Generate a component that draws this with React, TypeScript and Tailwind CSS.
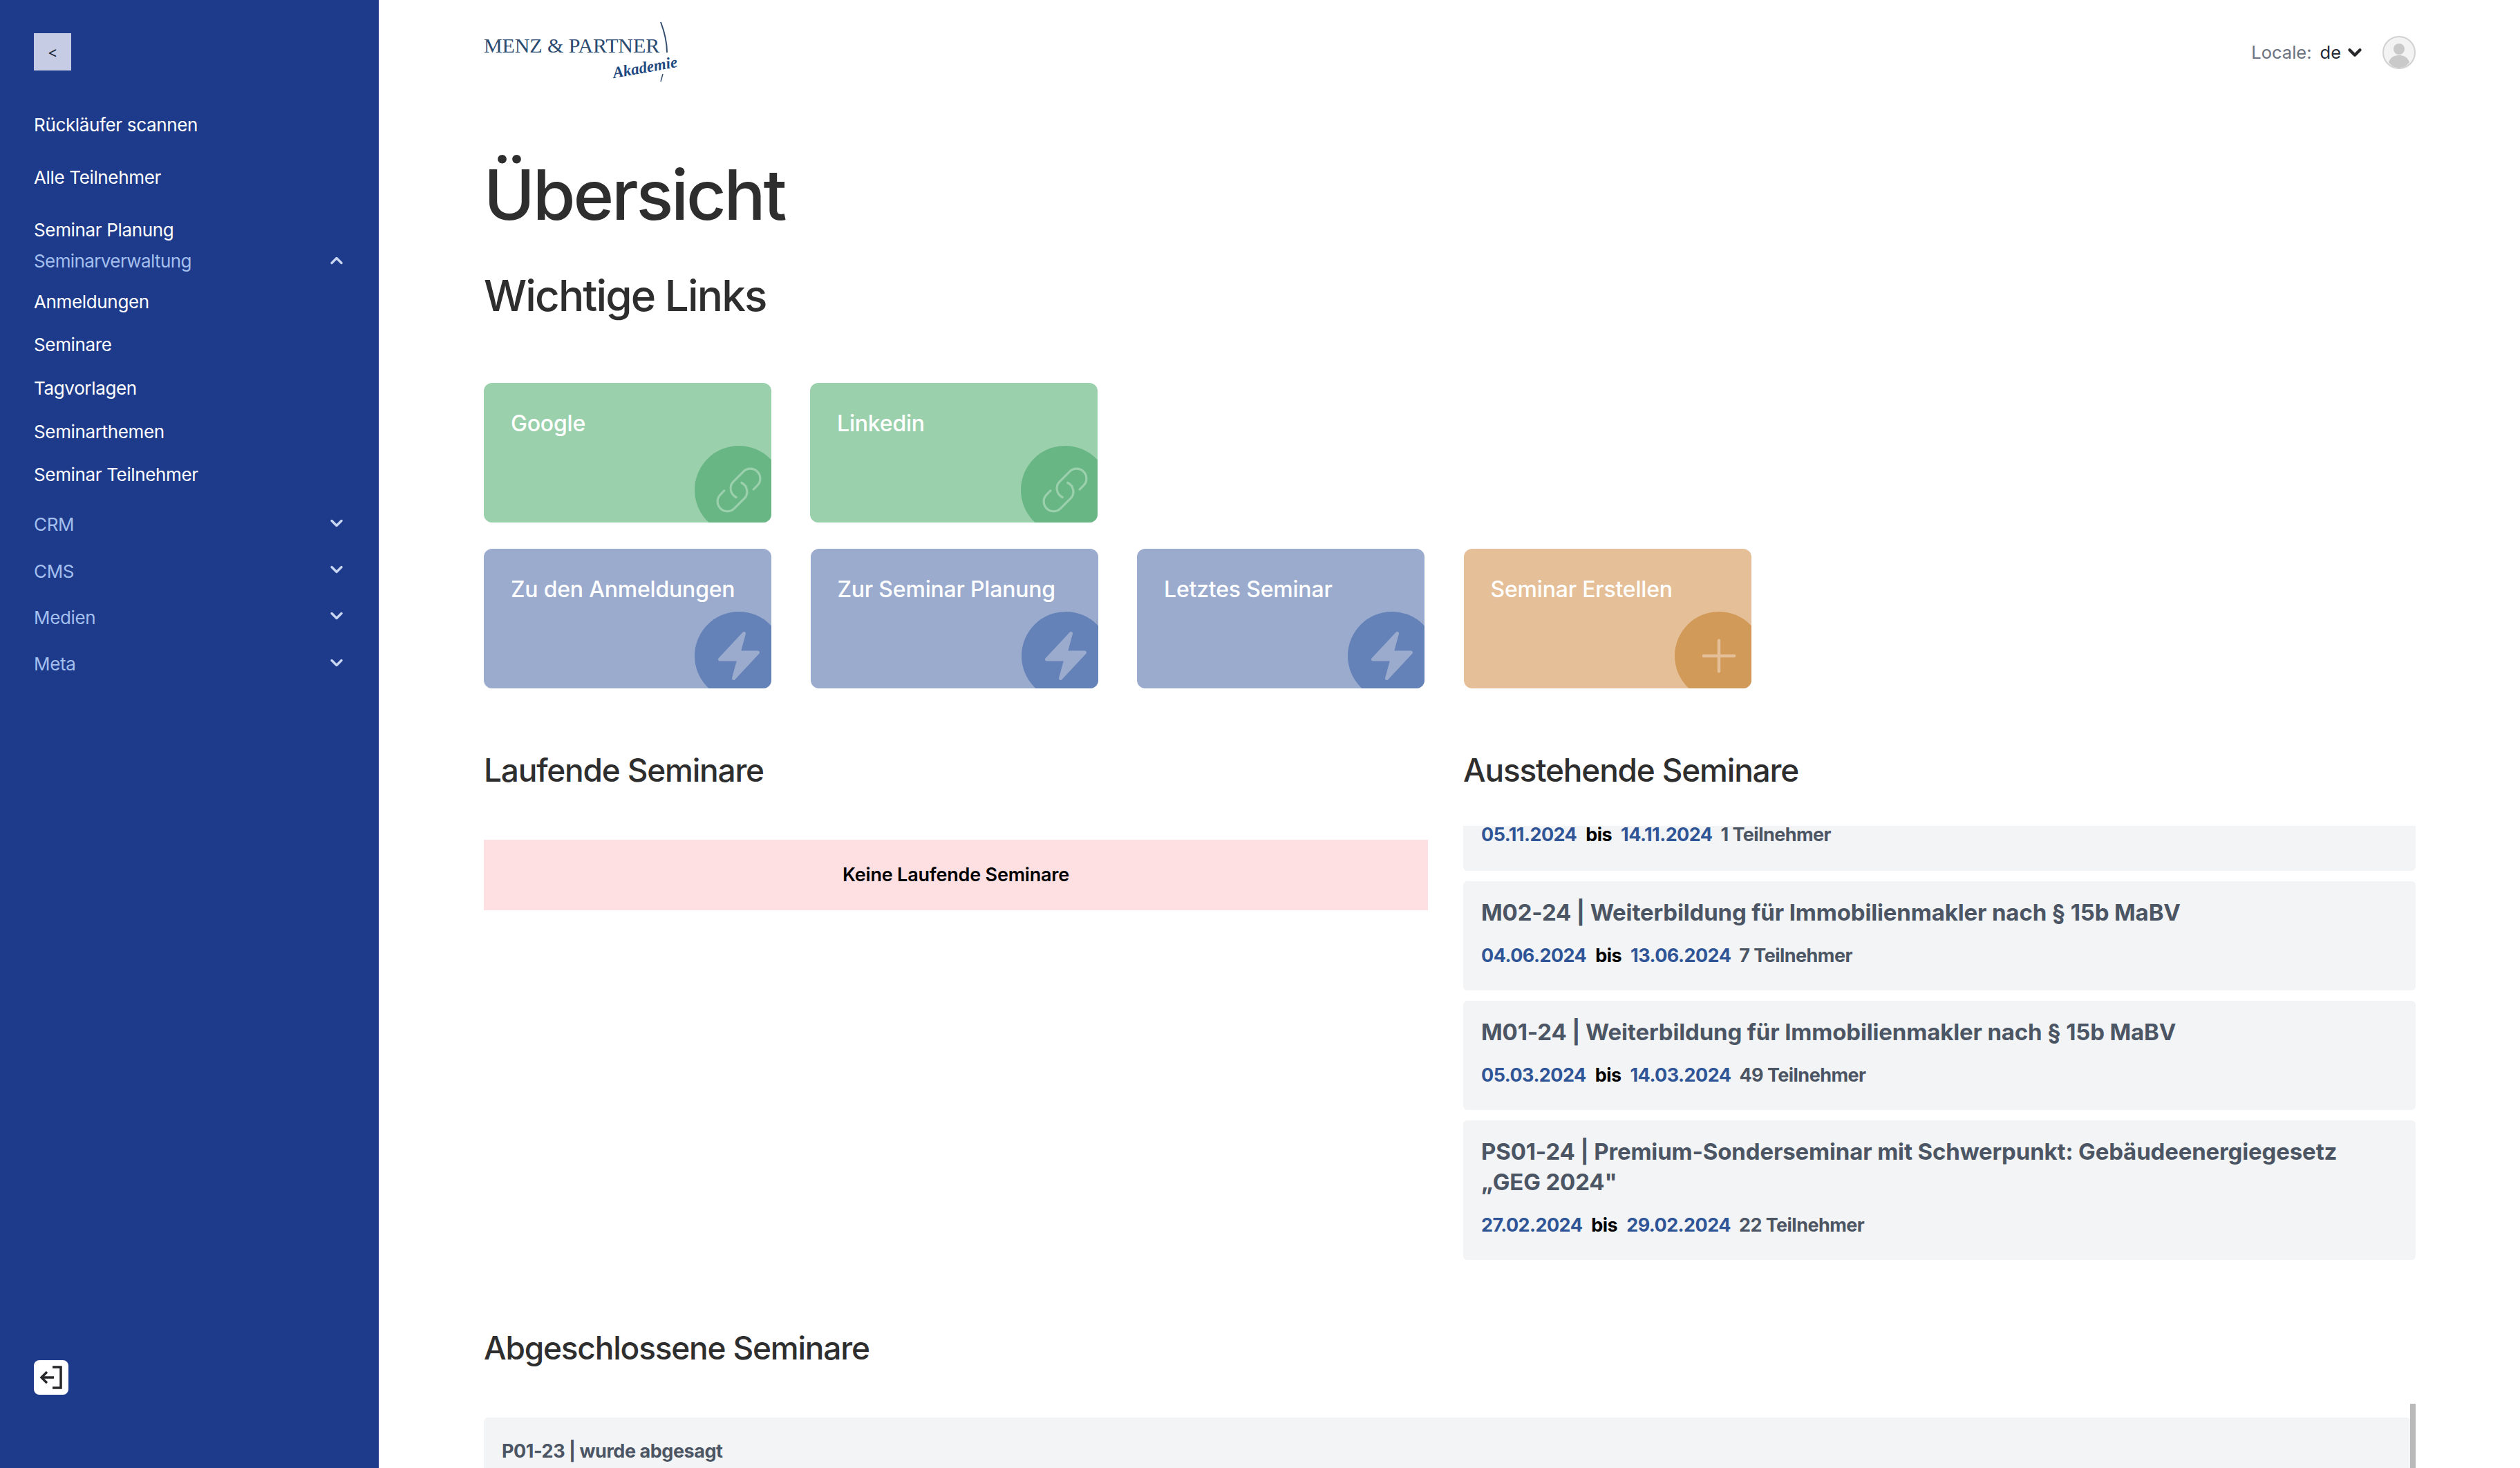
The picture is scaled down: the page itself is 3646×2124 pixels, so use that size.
import { ChevronDown, ChevronUp, Plus } from "lucide-react";
import { HiBolt, HiOutlineLink } from "react-icons/hi2";

const subLinks = ["Anmeldungen", "Seminare", "Tagvorlagen", "Seminarthemen", "Seminar Teilnehmer"];
const groups = ["CRM", "CMS", "Medien", "Meta"];

const upcoming = [
  {
    title: "M02-24 | Weiterbildung für Immobilienmakler nach § 15b MaBV",
    from: "04.06.2024",
    to: "13.06.2024",
    people: "7 Teilnehmer",
  },
  {
    title: "M01-24 | Weiterbildung für Immobilienmakler nach § 15b MaBV",
    from: "05.03.2024",
    to: "14.03.2024",
    people: "49 Teilnehmer",
  },
  {
    title: "PS01-24 | Premium-Sonderseminar mit Schwerpunkt: Gebäudeenergiegesetz „GEG\u00a02024\"",
    from: "27.02.2024",
    to: "29.02.2024",
    people: "22 Teilnehmer",
  },
];

function Sidebar() {
  return (
    <aside className="w-[548px] shrink-0 h-full bg-[#1e3a8a] flex flex-col pl-[49px] pr-[50px] text-[26px] tracking-[-0.35px]">
      <button className="mt-[48px] w-[54px] h-[54px] shrink-0 bg-[#c7cce5] flex items-center justify-center text-[#1f2937] text-[22px]">
        &lt;
      </button>

      <div className="mt-[58px] flex flex-col gap-[36px] text-white">
        <a className="h-[40px] flex items-center">Rückläufer scannen</a>
        <a className="h-[40px] flex items-center">Alle Teilnehmer</a>
        <a className="h-[40px] flex items-center">Seminar Planung</a>
      </div>

      <div className="mt-[10px] h-[30px] flex items-center justify-between text-[#a3bfee] tracking-[-0.6px]">
        <span>Seminarverwaltung</span>
        <ChevronUp size={28} strokeWidth={3} className="text-[#c9d6f2] -mr-[3px]" />
      </div>

      <div className="mt-[24px] flex flex-col gap-[22.7px] text-white">
        {subLinks.map((link) => (
          <a key={link} className="h-[40px] flex items-center">
            {link}
          </a>
        ))}
      </div>

      <div className="mt-[32px] flex flex-col gap-[27.3px] text-[#a3bfee]">
        {groups.map((group) => (
          <div key={group} className="h-[40px] flex items-center justify-between">
            <span>{group}</span>
            <ChevronDown size={28} strokeWidth={3} className="text-[#c9d6f2] -mr-[3px] -mt-[4px]" />
          </div>
        ))}
      </div>

      <button className="mt-auto mb-[106px] w-[50px] h-[50px] shrink-0 bg-white rounded-lg flex items-center justify-center">
        <svg width="36" height="34" viewBox="0 0 36 34" fill="none" stroke="#27272a" strokeWidth="3.5">
          <path d="M20 2H32V32H20" />
          <path d="M22 17H5" />
          <path d="M12 9L4 17L12 25" />
        </svg>
      </button>
    </aside>
  );
}

function Logo() {
  return (
    <div className="relative w-[290px] h-[100px] font-['Liberation_Serif',serif]">
      <span className="absolute left-0 top-[35px] text-[30px] leading-[22px] tracking-[-0.1px] text-[#2b4a70] whitespace-nowrap">
        MENZ &amp; PARTNER
      </span>
      <span className="absolute left-[186px] top-[66px] text-[23px] leading-[24px] italic font-bold text-[#1f4a80] -rotate-[10deg] whitespace-nowrap">
        Akademie
      </span>
      {/* swoosh of the logo */}
      <svg className="absolute left-[240px] top-0" width="40" height="100" viewBox="0 0 40 100" fill="none" stroke="#35506f">
        <path d="M16 12C22 28 25 42 25 56" strokeWidth="2" />
        <path d="M19 87L16 98" strokeWidth="1.5" />
      </svg>
    </div>
  );
}

function Header() {
  return (
    <header className="flex items-start justify-between pt-[20px]">
      <Logo />
      <div className="flex items-center mt-[32px] text-[25.5px] leading-[48px]">
        <span className="text-[#6b7280]">Locale:</span>
        <span className="ml-[12px] text-[#1f2937]">de</span>
        <ChevronDown size={30} strokeWidth={3.5} className="ml-[5px] text-[#27272a]" />
        <svg className="ml-[25px]" width="48" height="48" viewBox="0 0 48 48">
          <circle cx="24" cy="24" r="23" fill="#f3f3f3" stroke="#d1d1d1" strokeWidth="2" />
          <circle cx="24" cy="19" r="8" fill="#c9c9c9" />
          <path d="M9 38C12 30 18 28 24 28C30 28 36 30 39 38C35 44 29 46 24 46C19 46 13 44 9 38Z" fill="#c9c9c9" />
        </svg>
      </div>
    </header>
  );
}

function LinkCard({
  label,
  card,
  circle,
  children,
}: {
  label: string;
  card: string;
  circle: string;
  children: React.ReactNode;
}) {
  return (
    <a className={`relative block w-[416px] h-[202px] rounded-xl overflow-hidden pl-[39px] pt-[38px] text-white text-[32px] leading-[42px] font-medium tracking-[-0.2px] ${card}`}>
      {label}
      <span className={`absolute -right-[17px] -bottom-[17px] w-[128px] h-[128px] rounded-full flex items-center justify-center ${circle}`}>
        {children}
      </span>
    </a>
  );
}

function GreenCard({ label }: { label: string }) {
  return (
    <LinkCard label={label} card="bg-[#9bd0ac]" circle="bg-[#68b684]">
      <HiOutlineLink size={76} strokeWidth={1} className="text-[#9bd0ac]" />
    </LinkCard>
  );
}

function BlueCard({ label }: { label: string }) {
  return (
    <LinkCard label={label} card="bg-[#9babce]" circle="bg-[#6482b7]">
      <HiBolt size={80} className="text-[#9babce]" />
    </LinkCard>
  );
}

function DateRow({ from, to, people }: { from: string; to: string; people: string }) {
  return (
    <div className="flex text-[27px] font-bold tracking-[-0.55px]">
      <span className="text-[#2f5597]">{from}</span>
      <span className="ml-[13px] text-black">bis</span>
      <span className="ml-[13px] text-[#2f5597]">{to}</span>
      <span className="ml-[12px] text-[#4b5563]">{people}</span>
    </div>
  );
}

export default function App() {
  return (
    <div className="flex w-[3646px] h-[2124px] overflow-hidden bg-white font-[Inter,sans-serif]">
      <Sidebar />

      <main className="flex-1 min-w-0 pl-[152px] pr-[151px]">
        <Header />

        <h1 className="mt-[97px] text-[100px] leading-[130px] font-medium tracking-[-3.2px] text-[#2e2e2e]">Übersicht</h1>
        <h2 className="mt-[39px] text-[62px] leading-[84px] font-medium tracking-[-1.9px] text-[#2e2e2e]">Wichtige Links</h2>

        {/* Cards */}
        <div className="mt-[84px] flex flex-col gap-[38px]">
          <div className="flex gap-[56px]">
            <GreenCard label="Google" />
            <GreenCard label="Linkedin" />
          </div>
          <div className="flex gap-[56.5px]">
            <BlueCard label="Zu den Anmeldungen" />
            <BlueCard label="Zur Seminar Planung" />
            <BlueCard label="Letztes Seminar" />
            <LinkCard label="Seminar Erstellen" card="bg-[#e5bf98]" circle="bg-[#d19a58]">
              <Plus size={76} strokeWidth={1.4} className="text-[#e5bf98]" />
            </LinkCard>
          </div>
        </div>

        <div className="mt-[86px] flex gap-[51px]">
          <section className="w-[1366px] shrink-0">
            <h3 className="text-[46px] leading-[64px] font-medium tracking-[-1.2px] text-[#2e2e2e]">Laufende Seminare</h3>
            <div className="mt-[69px] h-[102px] bg-[#fee0e3] flex items-center justify-center text-[27px] font-semibold tracking-[-0.2px] text-black">
              Keine Laufende Seminare
            </div>
          </section>

          <section className="flex-1 min-w-0">
            <h3 className="text-[46px] leading-[64px] font-medium tracking-[-1.2px] text-[#2e2e2e]">Ausstehende Seminare</h3>
            <div className="mt-[49px] flex flex-col gap-[15px]">
              <div className="bg-[#f3f4f6] rounded-b-md px-[26px] pb-[39px] leading-[26px]">
                <DateRow from="05.11.2024" to="14.11.2024" people="1 Teilnehmer" />
              </div>
              {upcoming.map((seminar) => (
                <div key={seminar.title} className="bg-[#f3f4f6] rounded-md px-[26px] pt-[23px] pb-[33px]">
                  <div className="text-[33px] leading-[44px] font-bold tracking-[-0.15px] text-[#4b5563]">{seminar.title}</div>
                  <div className="mt-[24px] leading-[34px]">
                    <DateRow from={seminar.from} to={seminar.to} people={seminar.people} />
                  </div>
                </div>
              ))}
            </div>
          </section>
        </div>

        <h3 className="mt-[95px] text-[46px] leading-[64px] font-medium tracking-[-1.2px] text-[#2e2e2e]">Abgeschlossene Seminare</h3>
        <div className="relative mt-[49px] pt-[20px] pr-[7px]">
          <div className="bg-[#f3f4f6] rounded-t-md px-[26px] pt-[32px] h-[200px] text-[27px] leading-[34px] font-bold tracking-[-0.45px] text-[#4b5563]">
            P01-23 | wurde abgesagt
          </div>
          {/* overlay scrollbar */}
          <div className="absolute right-0 top-0 w-[8px] h-[200px] bg-[#b9b9ba]" />
        </div>
      </main>
    </div>
  );
}
